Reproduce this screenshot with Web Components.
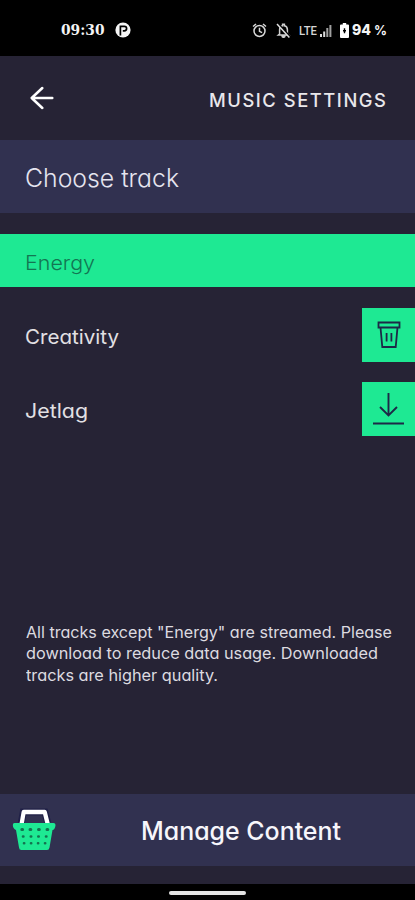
<!DOCTYPE html>
<html lang="en">
<head>
<meta charset="utf-8">
<title>Music settings</title>
<style>
html,body{margin:0;height:100%;background:#262335}
body{font-family:Inter,"Open Sans",sans-serif;font-feature-settings:"cv11" 1;color:#e2e0e4}
</style>
</head>
<body>
<music-screen></music-screen>
<script>
const define = (name, html, ready) => {
  const template = document.createElement('template');
  template.innerHTML = html;
  customElements.define(name, class extends HTMLElement {
    connectedCallback() {
      if (this.shadowRoot) return;
      this.attachShadow({mode: 'open'}).append(template.content.cloneNode(true));
      if (ready) ready(this, this.shadowRoot);
    }
  });
};

// One line of text stretched to the width given by its "w" attribute.
define('text-line', `<style>
:host{display:block;white-space:nowrap;flex:none}
span{display:inline-block;transform-origin:0 50%}
</style><span><slot></slot></span>`, (el, root) => {
  const span = root.querySelector('span');
  const w = parseFloat(el.getAttribute('w'));
  const natural = span.getBoundingClientRect().width;
  el.style.width = w + 'px';
  if (natural) span.style.transform = `scaleX(${w / natural})`;
});

define('status-bar', `<style>
:host{display:flex;height:56px;background:#000;color:#f4f4f4;box-sizing:border-box;padding:4px 28px 0 61px;align-items:center}
svg{display:block;flex:none}
.time{font:bold 14px/20px "DejaVu Serif",serif}
.app{margin-left:10.5px}
.right{margin-left:auto;display:flex;align-items:center}
.lte{font:500 13.5px/20px Roboto,sans-serif;color:#d5d5d5;margin-left:8px}
.pct{font:800 14.5px/20px Inter,sans-serif}
</style>
<text-line class="time" w="43.5">09:30</text-line>
<svg class="app" width="16" height="16" viewBox="0 0 16 16"><circle cx="8" cy="8" r="7.6" fill="#f6f6f6"/><path d="M5.4 13.500V4.300h3.900a2.300 2.300 0 0 1 0 4.600H7.800" fill="none" stroke="#000" stroke-width="1.700"/></svg>
<div class="right">
<svg width="15" height="15" viewBox="0 0 15 15" fill="none" stroke="#d8d8d8" stroke-width="1.5"><circle cx="7.5" cy="8" r="5.5"/><path d="M1 3.5 4 1M14 3.5 11 1M7.5 4.8v3.5l2.6 1.4"/></svg>
<svg style="margin-left:9px" width="15" height="15" viewBox="0 0 15 15"><path d="M3.6 11V6.8c0-2.2 1.1-3.6 3-4V1.3h1.8v1.5c1.9.4 3 1.8 3 4V11l1.2 1H2.4zM6 12.8h3a1.5 1.5 0 0 1-3 0z" fill="none" stroke="#d0d0d0" stroke-width="1.5"/><path d="M2 .8 14.2 14" stroke="#000" stroke-width="2"/><path d="M1 1 13.4 14.4" stroke="#dedede" stroke-width="1.5"/></svg>
<text-line class="lte" w="18">LTE</text-line>
<svg style="margin-left:3px" width="12" height="13" viewBox="0 0 12 13"><path d="M0 10h2v3H0zM3.2 7.5h2V13h-2z" fill="#ddd"/><path d="M6.3 4h2v9h-2zM9.4 1h2v12h-2z" fill="#a0a0a0"/></svg>
<svg style="margin-left:7.5px" width="9" height="15" viewBox="0 0 9 15"><path d="M2.8 0h3.4v1.5H8q1 0 1 1V14q0 1-1 1H1q-1 0-1-1V2.5q0-1 1-1h1.8z" fill="#fff"/><path d="M4.5 5.2v5M3 7.7h3" stroke="#000" stroke-width="1.4"/></svg>
<text-line class="pct" w="19" style="margin-left:3.5px">94</text-line>
<text-line class="pct" w="13" style="margin-left:3px;font-weight:700;font-size:13.5px">%</text-line>
</div>`);

define('title-bar', `<style>
:host{display:flex;height:84px;box-sizing:border-box;padding:0 28px 0 30px;justify-content:space-between;align-items:center}
text-line{font-size:19px;line-height:24px;font-weight:500;letter-spacing:1.6px;padding-top:5px;color:#e9e7eb}
</style>
<svg width="24" height="24" viewBox="0 0 24 24" fill="none" stroke="#fff" stroke-width="2.500" stroke-linecap="round" stroke-linejoin="round"><path d="M22.300 12H1.800M12.300 2 1.700 12l10.600 10"/></svg>
<text-line w="178.5"><slot></slot></text-line>`);

define('section-band', `<style>
:host{display:flex;height:73px;background:#313150;align-items:center;padding-left:25px;font-size:25px;line-height:30px;font-weight:300;color:#e5e4ef}
::slotted(text-line){padding-top:2px}
</style><slot></slot>`);

define('track-row', `<style>
:host{display:flex;height:53px;margin-top:21px;align-items:center;justify-content:space-between;padding-left:25px;font-size:20px;line-height:24px}
::slotted(text-line){padding-top:4px}
:host([selected]){background:#1ee993;color:#137552;font-weight:300}
:host([selected]) ::slotted(text-line){padding-top:5px}
</style><slot></slot><slot name="action"></slot>`);

define('icon-button', `<style>
:host{display:flex;width:53px;height:54px;background:#1ee993;justify-content:center;align-items:center}
::slotted(svg){display:block}
</style><slot></slot>`);

define('manage-bar', `<style>
:host{display:flex;height:72px;background:#313150;align-items:center;padding-left:12px;color:#f7f6fb;font-size:25px;line-height:30px;font-weight:500}
svg{display:block;flex:none}
text-line{margin-left:85px;padding-top:2px}
</style>
<svg width="44" height="44" viewBox="0 0 44 44">
<path d="M9.300 15 11.300 4h21.500L35.700 15" fill="none" stroke="#202047" stroke-width="7"/>
<path d="M9.600 16 11.700 4h21L35.700 16" fill="none" stroke="#fff" stroke-width="4.300" stroke-linejoin="round"/>
<path d="M2.5 15h39q2 0 2 2t-1.2 4q-.8 1-1.8 1L37.5 39.500q-.4 2.5-2.5 2.5H9.5Q7.2 42 7 39.500L4 22q-1-.2-2-1.500Q.8 19 .8 17q0-2 1.700-2z" fill="#1ee993"/>
<g fill="none" stroke="#14724f" stroke-width="3" stroke-linecap="round"><path d="M9.800 21.500h.8M18 21.500h.8M26.500 21.500h.8M35 21.500h.8"/><path d="M11 28.500h.4M18.800 28.500h.4M26.300 28.500h.4M34 28.500h.4M12 35.300h.2M19 35.300h.2M26 35.300h.2M33 35.300h.2" stroke-width="2.600"/></g>
</svg>
<text-line w="200"><slot></slot></text-line>`);

define('nav-handle', `<style>
:host{display:flex;height:16px;background:#000;justify-content:center}
i{width:77px;height:4px;border-radius:2px;background:#e4e4e4;margin-top:7px}
</style><i></i>`);

define('music-screen', `<style>
:host{display:flex;flex-direction:column;width:415px;height:900px;background:#262335;overflow:hidden}
.note{margin-top:auto;margin-bottom:108px;padding-left:25.500px;font-size:16px;line-height:21.300px;color:#dddbe0}
manage-bar{margin-bottom:18px}
</style>
<status-bar></status-bar>
<title-bar>MUSIC SETTINGS</title-bar>
<section-band><text-line w="154">Choose track</text-line></section-band>
<track-row selected><text-line w="70">Energy</text-line></track-row>
<track-row><text-line w="94">Creativity</text-line><icon-button slot="action"><svg width="24" height="28" viewBox="0 0 24 28" fill="none" stroke="#1d2947" stroke-width="1.800"><path d="M1.500 1.500h21v5h-21zM3.500 6.500 5.300 26h13.400L20.500 6.500M9.600 12v8.500M14.400 12v8.500"/></svg></icon-button></track-row>
<track-row><text-line w="63">Jetlag</text-line><icon-button slot="action"><svg width="32" height="34" viewBox="0 0 32 34" fill="none" stroke="#1d2947" stroke-width="1.900"><path d="M15.500 1v22.500M7 15l8.500 8.500L24 15M0 31.500h31"/></svg></icon-button></track-row>
<div class="note">
<text-line w="366">All tracks except "Energy" are streamed. Please</text-line>
<text-line w="352">download to reduce data usage. Downloaded</text-line>
<text-line w="192">tracks are higher quality.</text-line>
</div>
<manage-bar>Manage Content</manage-bar>
<nav-handle></nav-handle>`);
</script>
</body>
</html>
